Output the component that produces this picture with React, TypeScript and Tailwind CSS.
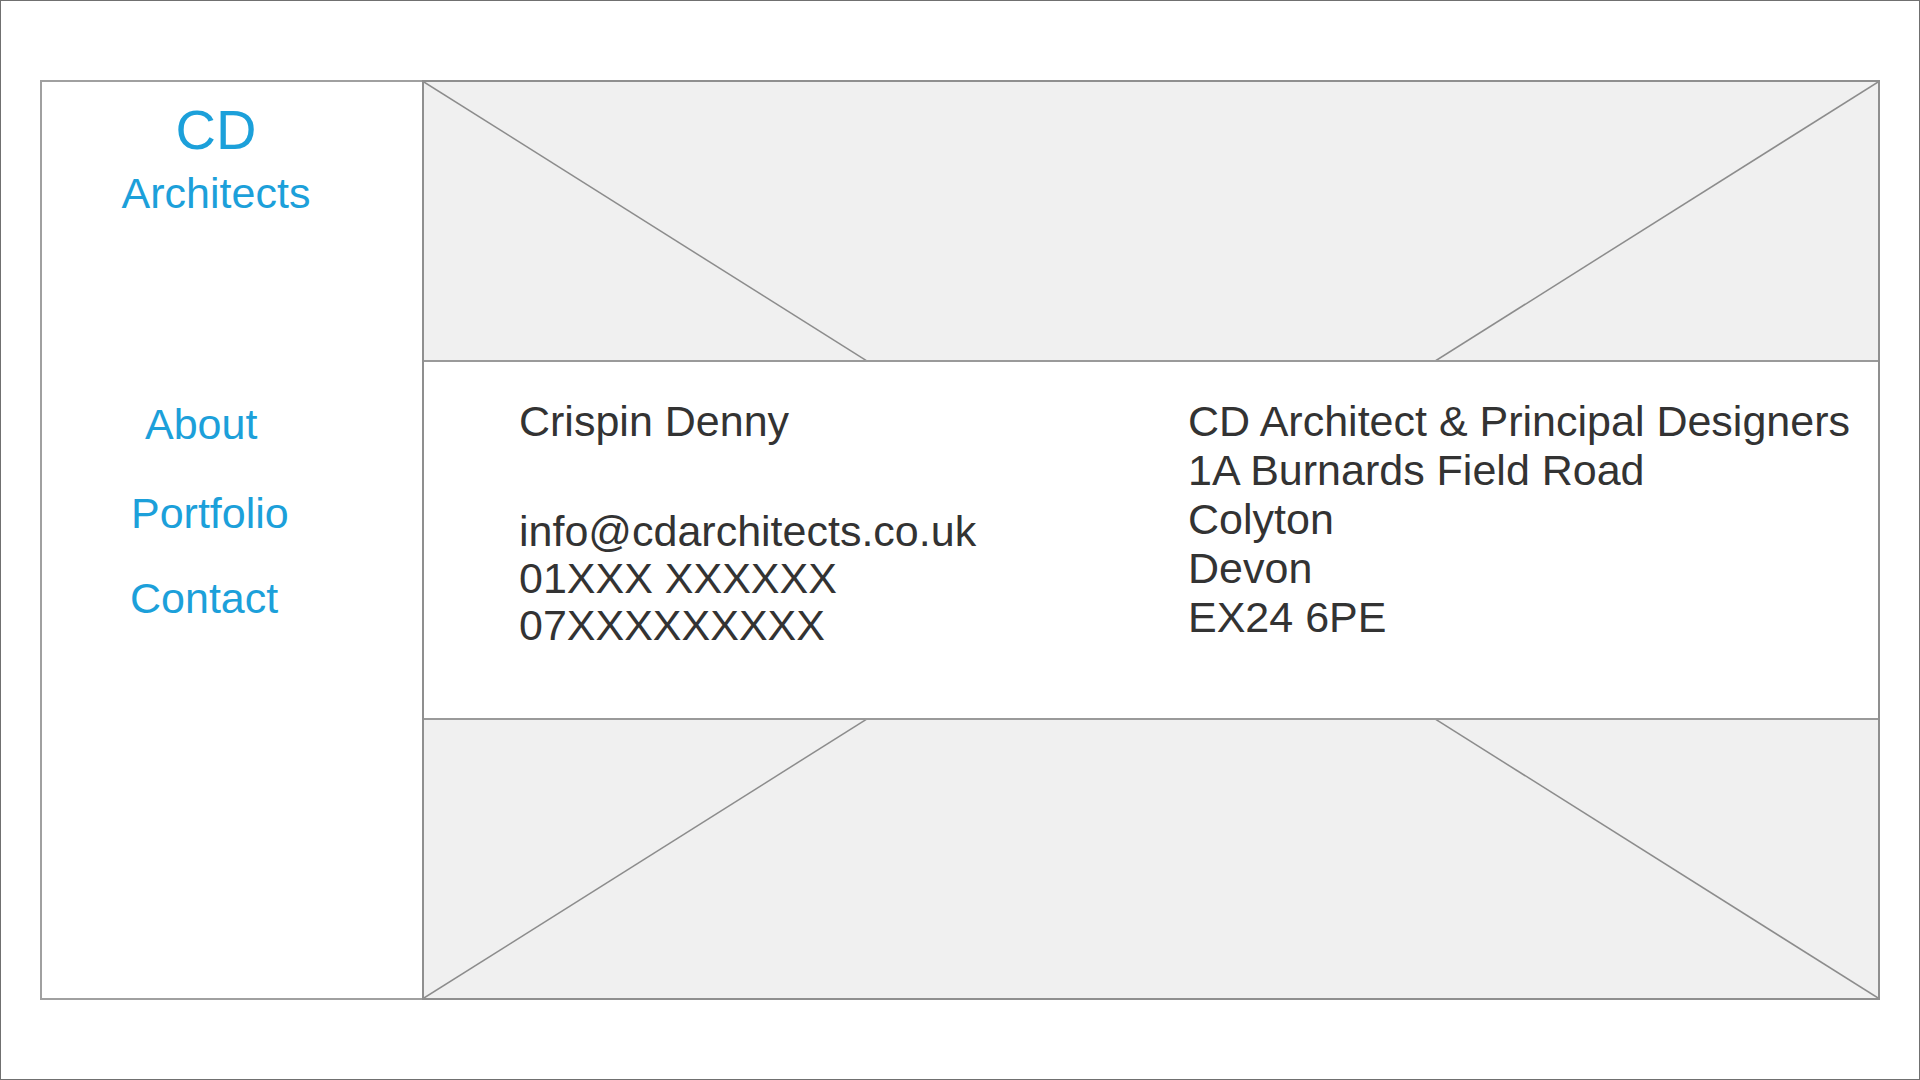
import React from "react"

const font = "font-['Liberation_Sans',Arial,sans-serif]"

const navItems = [
  { label: "About", cls: "pl-[103px]" },
  { label: "Portfolio", cls: "mt-[41px] pl-[89px]" },
  { label: "Contact", cls: "mt-[37px] pl-[88px]" },
]

const address = [
  "CD Architect & Principal Designers",
  "1A Burnards Field Road",
  "Colyton",
  "Devon",
  "EX24 6PE",
]

function CrossLines() {
  return (
    <svg className="absolute inset-0 h-full w-full" viewBox="0 0 100 100" preserveAspectRatio="none">
      <line x1="0" y1="0" x2="100" y2="100" stroke="#8c8c8c" strokeWidth="1.5" vectorEffect="non-scaling-stroke" />
      <line x1="100" y1="0" x2="0" y2="100" stroke="#8c8c8c" strokeWidth="1.5" vectorEffect="non-scaling-stroke" />
    </svg>
  )
}

export default function App() {
  return (
    <main className={`h-screen w-full border border-[#707070] bg-white pt-[79px] pb-[79px] pl-[39px] pr-[39px] ${font}`}>
      <div className="flex h-full w-full">
        <aside className="flex w-[382px] shrink-0 flex-col border-2 border-r-0 border-[#a0a0a0] bg-white">
          <div className="flex flex-col items-center pt-[20px] pr-8 text-[#1ca0da]">
            <div className="text-[56px] leading-[56px]">CD</div>
            <div className="mt-[11px] text-[43px] leading-[48px]">Architects</div>
          </div>
          <nav className="mt-[183px] flex flex-col text-[43px] leading-[48px] text-[#1ca0da]">
            {navItems.map((item) => (
              <a key={item.label} href="#" className={`block ${item.cls}`}>
                {item.label}
              </a>
            ))}
          </nav>
        </aside>

        <section className="relative flex flex-1 flex-col border-2 border-[#8f8f8f] bg-[#f0f0f0]">
          <CrossLines />
          <div className="h-[278px] shrink-0" />
          <div className="relative z-10 flex h-[360px] shrink-0 border-y-2 border-[#9a9a9a] bg-white pt-[35px] pl-[95px] text-[43px] text-[#333333]">
            <div className="w-[669px] shrink-0">
              <div className="leading-[48px]">Crispin Denny</div>
              <div className="mt-[63px] leading-[47px]">
                <div>info@cdarchitects.co.uk</div>
                <div>01XXX XXXXXX</div>
                <div>07XXXXXXXXX</div>
              </div>
            </div>
            <div className="whitespace-nowrap leading-[49px]">
              {address.map((line) => (
                <div key={line}>{line}</div>
              ))}
            </div>
          </div>
          <div className="flex-1" />
        </section>
      </div>
    </main>
  )
}
